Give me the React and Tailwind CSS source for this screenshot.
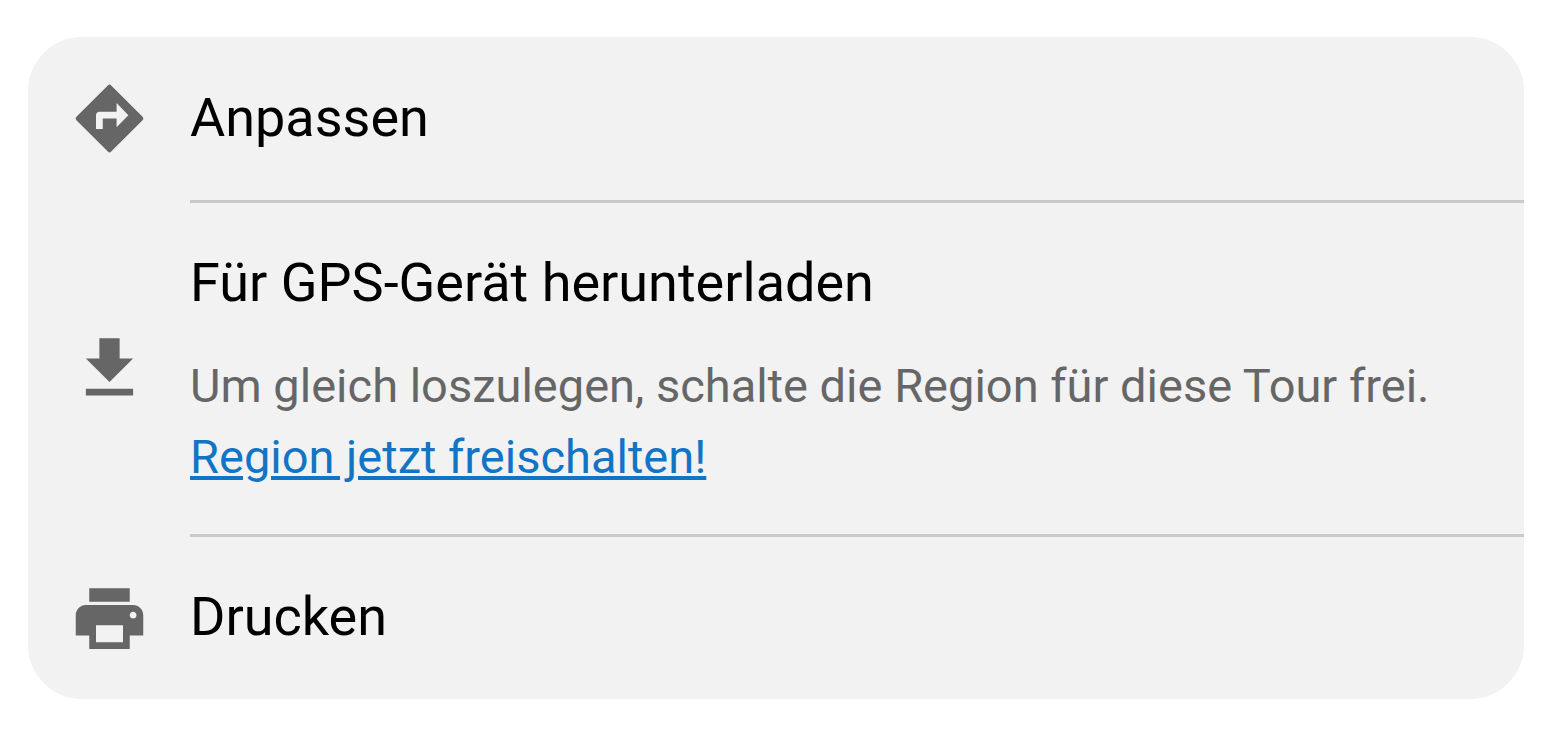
import React from 'react';
import { MdFileDownload, MdPrint } from 'react-icons/md';

const DirectionsIcon = ({ className }) => (
  <svg viewBox="0 0 24 24" fill="currentColor" className={className} aria-hidden="true">
    <path d="M21.8 11.5l-9.3-9.3a.7.7 0 0 0-1 0l-9.3 9.3a.7.7 0 0 0 0 1l9.3 9.3a.7.7 0 0 0 1 0l9.3-9.3a.7.7 0 0 0 0-1zM14.1 14.6v-2.6H10v3.1H8v-4.1c0-.55.45-1 1-1h5.1V7.4l3.5 3.6z" />
  </svg>
);

const App = () => {
  return (
    <div className="bg-white pt-[37px] pb-12 pl-7 pr-5 font-['Roboto',sans-serif]">
      <ul className="bg-[#f2f2f2] rounded-[54px] overflow-hidden">
        {/* Customize */}
        <li className="flex">
          <div className="w-[162px] shrink-0 flex items-center justify-center border-b-3 border-transparent">
            <DirectionsIcon className="w-[81px] h-[81px] text-[#666666]" />
          </div>
          <div className="flex-1 border-b-3 border-[#cacaca] pt-[43px] pb-11">
            <button className="block text-[54px] leading-[76px] text-black">Anpassen</button>
          </div>
        </li>

        {/* GPS download */}
        <li className="flex">
          <div className="w-[162px] shrink-0 flex items-center justify-center border-b-3 border-transparent">
            <MdFileDownload className="w-[81px] h-[81px] text-[#666666]" />
          </div>
          <div className="flex-1 border-b-3 border-[#cacaca] pt-[42px] pb-[42px]">
            <button className="block text-[54px] leading-[76px] text-black">Für GPS-Gerät herunterladen</button>
            <p className="mt-[29px] text-[47px] leading-[71px] text-[#666666]">
              Um gleich loszulegen, schalte die Region für diese Tour frei.{' '}
              <a href="#" className="block text-[#1274c5] underline">Region jetzt freischalten!</a>
            </p>
          </div>
        </li>

        {/* Print */}
        <li className="flex">
          <div className="w-[162px] shrink-0 flex items-center justify-center">
            <MdPrint className="w-[81px] h-[81px] text-[#666666]" />
          </div>
          <div className="flex-1 pt-[42px] pb-11">
            <button className="block text-[54px] leading-[76px] text-black">Drucken</button>
          </div>
        </li>
      </ul>
    </div>
  );
};

export default App;
